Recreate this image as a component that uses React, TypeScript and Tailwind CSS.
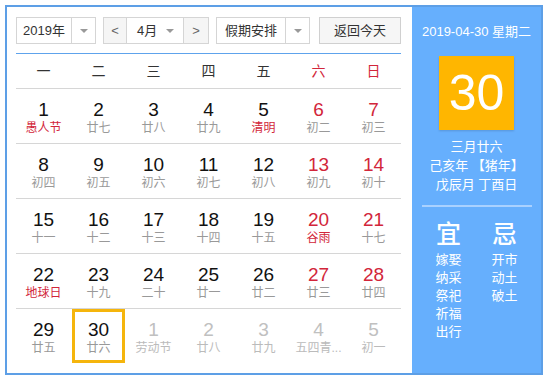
import React from "react";

type Day = { d: number; l: string; red?: boolean; fest?: boolean; other?: boolean; sel?: boolean };

const weeks: Day[][] = [
  [
    { d: 1, l: "愚人节", fest: true },
    { d: 2, l: "廿七" },
    { d: 3, l: "廿八" },
    { d: 4, l: "廿九" },
    { d: 5, l: "清明", fest: true },
    { d: 6, l: "初二", red: true },
    { d: 7, l: "初三", red: true },
  ],
  [
    { d: 8, l: "初四" },
    { d: 9, l: "初五" },
    { d: 10, l: "初六" },
    { d: 11, l: "初七" },
    { d: 12, l: "初八" },
    { d: 13, l: "初九", red: true },
    { d: 14, l: "初十", red: true },
  ],
  [
    { d: 15, l: "十一" },
    { d: 16, l: "十二" },
    { d: 17, l: "十三" },
    { d: 18, l: "十四" },
    { d: 19, l: "十五" },
    { d: 20, l: "谷雨", red: true, fest: true },
    { d: 21, l: "十七", red: true },
  ],
  [
    { d: 22, l: "地球日", fest: true },
    { d: 23, l: "十九" },
    { d: 24, l: "二十" },
    { d: 25, l: "廿一" },
    { d: 26, l: "廿二" },
    { d: 27, l: "廿三", red: true },
    { d: 28, l: "廿四", red: true },
  ],
  [
    { d: 29, l: "廿五" },
    { d: 30, l: "廿六", sel: true },
    { d: 1, l: "劳动节", other: true },
    { d: 2, l: "廿八", other: true },
    { d: 3, l: "廿九", other: true },
    { d: 4, l: "五四青...", other: true },
    { d: 5, l: "初一", other: true },
  ],
];

const weekdays = ["一", "二", "三", "四", "五", "六", "日"];

function Caret() {
  return <span className="w-0 h-0 border-l-[4px] border-r-[4px] border-t-[4px] border-l-transparent border-r-transparent border-t-[#999]" />;
}

export default function App() {
  return (
    <div className="p-[5px] bg-white font-['Liberation_Sans','Noto_Sans_CJK_SC',sans-serif]">
      <div className="flex w-[538px] h-[370px] border-2 border-[#5d9fe6]">
        {/* calendar */}
        <div className="w-[405px] pl-[9px] pt-[10px] bg-white">
          <div className="flex h-[27px] text-[13px] text-[#333] whitespace-nowrap">
            <div className="flex w-[80px] border border-[#d5d5d5]">
              <span className="flex-1 flex items-center justify-center">2019年</span>
              <span className="w-[24px] border-l border-[#d5d5d5] flex items-center justify-center"><Caret /></span>
            </div>
            <div className="flex ml-[7px] w-[106px] border border-[#d5d5d5]">
              <span className="w-[23px] bg-[#f5f5f5] border-r border-[#d5d5d5] flex items-center justify-center text-[#666]">&lt;</span>
              <span className="flex-1 flex items-center pl-[10px] pr-[9px]">
                <span>4月</span>
                <span className="ml-auto flex"><Caret /></span>
              </span>
              <span className="w-[25px] bg-[#f5f5f5] border-l border-[#d5d5d5] flex items-center justify-center text-[#666]">&gt;</span>
            </div>
            <div className="flex ml-[7px] w-[94px] border border-[#d5d5d5]">
              <span className="flex-1 flex items-center justify-center">假期安排</span>
              <span className="w-[24px] border-l border-[#d5d5d5] flex items-center justify-center"><Caret /></span>
            </div>
            <div className="ml-[9px] w-[82px] border border-[#d0d0d0] bg-[#f6f6f6] flex items-center justify-center">返回今天</div>
          </div>
          <div className="mt-[9px] w-[385px] border-t border-[#5ea3ec]">
            <div className="grid grid-cols-7 h-[34px] items-center text-[14px]">
              {weekdays.map((w, i) => (
                <div key={w} className={`text-center ${i > 4 ? "text-[#d2263a]" : "text-[#333]"}`}>{w}</div>
              ))}
            </div>
            {weeks.map((row, ri) => (
              <div key={ri} className="grid grid-cols-7 border-t border-[#d6d6d6] h-[55px]">
                {row.map((c, ci) => (
                  <div key={ci} className="flex justify-center">
                    <div
                      className={`w-[53px] h-[54px] flex flex-col items-center ${c.sel ? "border-[3px] border-[#f5b50c] pt-[7px]" : "pt-[10px]"}`}
                    >
                      <span
                        className={`text-[19px] leading-[21px] ${c.other ? "text-[#c0c0c0]" : c.red ? "text-[#d2263a]" : "text-[#111]"}`}
                      >
                        {c.d}
                      </span>
                      <span
                        className={`text-[12px] leading-[17px] whitespace-nowrap ${c.other ? "text-[#bbb]" : c.fest ? "text-[#d2263a]" : "text-[#999]"}`}
                      >
                        {c.l}
                      </span>
                    </div>
                  </div>
                ))}
              </div>
            ))}
          </div>
        </div>
        {/* side panel */}
        <div className="flex-1 bg-[#66affd] flex flex-col items-center text-white">
          <div className="mt-[16px] text-[13px] leading-[18px]">2019-04-30 星期二</div>
          <div className="mt-[15px] w-[75px] h-[74px] bg-[#ffb600] flex items-center justify-center text-[50px] leading-none shadow-[0_1px_2px_rgba(0,0,0,0.15)]">30</div>
          <div className="mt-[7px] text-[13px] leading-[19px] text-center">
            <div>三月廿六</div>
            <div>己亥年 【猪年】</div>
            <div>戊辰月 丁酉日</div>
          </div>
          <div className="mt-[11px] w-[110px] h-[2px] bg-[#a9d1ff]" />
          <div className="mt-[12px] flex gap-[30px] text-[13px] leading-[18px]">
            <div className="flex flex-col items-center">
              <span className="text-[25px] leading-[30px] mb-[2px] font-medium">宜</span>
              <span>嫁娶</span>
              <span>纳采</span>
              <span>祭祀</span>
              <span>祈福</span>
              <span>出行</span>
            </div>
            <div className="flex flex-col items-center">
              <span className="text-[25px] leading-[30px] mb-[2px] font-medium">忌</span>
              <span>开市</span>
              <span>动土</span>
              <span>破土</span>
            </div>
          </div>
        </div>
      </div>
    </div>
  );
}
